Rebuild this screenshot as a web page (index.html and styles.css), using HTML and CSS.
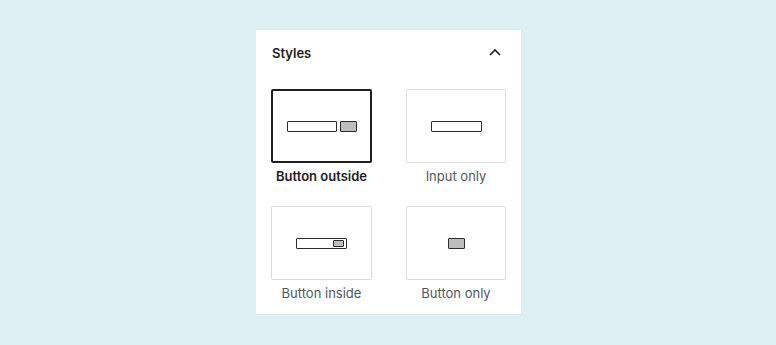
FILE: index.html
```html
<!DOCTYPE html>
<html>
<head>
<meta charset="utf-8">
<link rel="stylesheet" href="styles.css">
</head>
<body>
<div class="panel">
  <div class="panel-header">
    <span class="panel-title">Styles</span>
    <svg class="chevron" width="12" height="8" viewBox="0 0 12 8"><path d="M1 7 L6 2 L11 7" fill="none" stroke="#1e1e1e" stroke-width="1.6"/></svg>
  </div>
  <div class="variants">
    <div class="variant selected">
      <div class="tile">
        <div class="mock">
          <span class="m-input w50"></span>
          <span class="m-button"></span>
        </div>
      </div>
      <div class="label">Button outside</div>
    </div>
    <div class="variant">
      <div class="tile">
        <div class="mock">
          <span class="m-input w51"></span>
        </div>
      </div>
      <div class="label">Input only</div>
    </div>
    <div class="variant">
      <div class="tile">
        <div class="mock">
          <span class="m-input w51 inside"><span class="m-inner"></span></span>
        </div>
      </div>
      <div class="label">Button inside</div>
    </div>
    <div class="variant">
      <div class="tile">
        <div class="mock">
          <span class="m-button"></span>
        </div>
      </div>
      <div class="label">Button only</div>
    </div>
  </div>
</div>
</body>
</html>
```

FILE: styles.css
```css
html, body {
  margin: 0;
  padding: 0;
}
body {
  background: #dff0f5;
  width: 776px;
  height: 345px;
  padding: 30px 0 0 256px;
  box-sizing: border-box;
  font-family: Inter, "Noto Sans", sans-serif;
}
.panel {
  width: 265px;
  height: 284px;
  background: #fff;
  box-sizing: border-box;
  padding: 0 15px 0 15px;
  box-shadow: 0 1px 0 #e2e6e8;
}
.panel-header {
  display: flex;
  align-items: center;
  justify-content: space-between;
  height: 20px;
  padding: 13px 5px 0 1px;
  margin-bottom: 26px;
}
.panel-title {
  font-size: 13px;
  font-weight: 600;
  line-height: 20px;
  color: #1e1e1e;
}
.chevron {
  display: block;
  margin-top: -3px;
}
.variants {
  display: grid;
  grid-template-columns: 101px 100px;
  column-gap: 34px;
  row-gap: 22px;
}
.variant {
  display: flex;
  flex-direction: column;
}
.tile {
  height: 74px;
  border: 1px solid #dcdcde;
  border-radius: 2px;
  box-sizing: border-box;
  display: flex;
  align-items: center;
  justify-content: center;
}
.selected .tile {
  border: 2px solid #1e1e1e;
}
.mock {
  display: flex;
  align-items: center;
  gap: 3px;
}
.m-input {
  display: block;
  height: 11px;
  box-sizing: border-box;
  border: 1px solid #2c2c2c;
  border-radius: 1px;
  background: #fff;
}
.w50 { width: 50px; }
.w51 { width: 51px; }
.m-input.inside {
  display: flex;
  align-items: center;
  justify-content: flex-end;
  padding-right: 2px;
}
.m-inner {
  display: block;
  width: 11px;
  height: 7px;
  box-sizing: border-box;
  background: #bdbdbd;
  border: 1px solid #2c2c2c;
  border-radius: 1px;
}
.m-button {
  display: block;
  width: 17px;
  height: 11px;
  box-sizing: border-box;
  background: #bdbdbd;
  border: 1px solid #2c2c2c;
  border-radius: 1px;
}
.label {
  margin-top: 5px;
  font-size: 13px;
  line-height: 16px;
  text-align: center;
  color: #50575e;
}
.selected .label {
  color: #1e1e1e;
  font-weight: 600;
}
```
